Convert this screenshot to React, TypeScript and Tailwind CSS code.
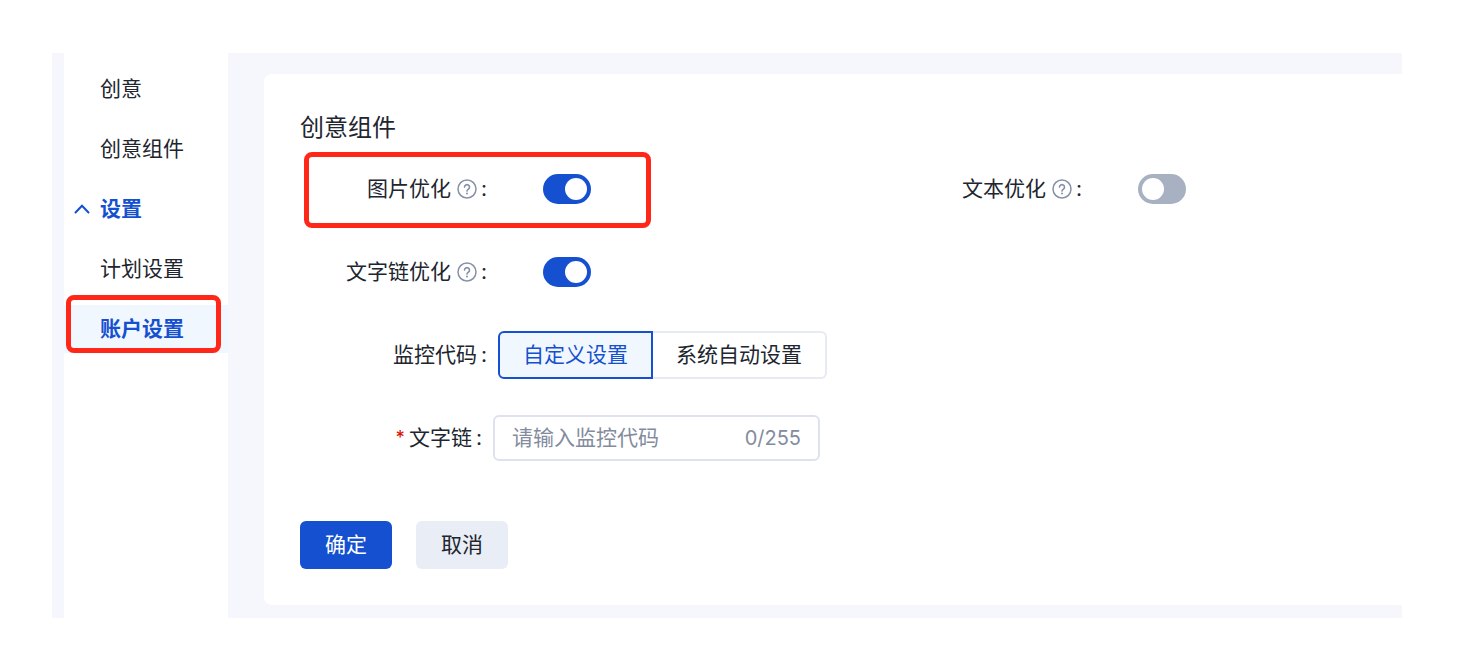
import { useState } from "react";
import type { ReactNode } from "react";

function HelpIcon() {
  return (
    <svg viewBox="0 0 20 20" className="size-5 text-[#8690a6]" fill="none" stroke="currentColor" aria-hidden="true">
      <circle cx="10" cy="10" r="9" strokeWidth="1.5" />
      <path d="M7.500 8.100a2.500 2.500 0 1 1 3.900 2.100c-.9.6-1.400 1-1.400 1.900" strokeWidth="1.6" strokeLinecap="round" />
      <circle cx="10" cy="14.4" r="1" fill="currentColor" stroke="none" />
    </svg>
  );
}

function SwitchRow({ id, label, on }: { id: string; label: string; on: boolean }) {
  return (
    <div className="flex h-12 items-center">
      <label htmlFor={id} className="flex w-[187px] items-center justify-end">
        {label}
        <span className="mr-1 ml-[6px]">
          <HelpIcon />
        </span>
        :
      </label>
      <input
        id={id}
        type="checkbox"
        role="switch"
        defaultChecked={on}
        className="ml-14 h-[30px] w-12 cursor-pointer appearance-none rounded-full bg-[#a7b1c2] p-1 before:block before:size-[22px] before:rounded-full before:bg-white checked:bg-[#1450cf] checked:before:ml-[18px]"
      />
    </div>
  );
}

function NavLink({ children }: { children: ReactNode }) {
  return (
    <a href="#" className="flex h-12 items-center pl-9">
      {children}
    </a>
  );
}

const segmentBase = "h-12 cursor-pointer border-2 px-[23px]";

export default function App() {
  const [custom, setCustom] = useState(true);
  const [open, setOpen] = useState(true);
  const [code, setCode] = useState("");

  return (
    <div className="bg-white pt-[53px] pr-20 pb-[33px] pl-[52px] font-['Inter','Noto_Sans_CJK_SC',sans-serif] text-[21px] leading-8 text-[#21252e]">
      <div className="flex bg-[#f6f7fc] pl-3">
        <nav className="flex w-[164px] shrink-0 flex-col gap-3 bg-white pt-3">
          <NavLink>创意</NavLink>
          <NavLink>创意组件</NavLink>
          <button
            type="button"
            aria-expanded={open}
            onClick={() => setOpen(!open)}
            className="flex h-12 cursor-pointer items-center gap-[10px] pl-[10px] font-bold text-[#1450cf]"
          >
            <svg viewBox="0 0 16 10" className="h-[10px] w-4" fill="none" stroke="currentColor" strokeWidth="2" strokeLinecap="round" aria-hidden="true">
              <path d="M1.5 8.5 8 1.8l6.500 6.700" />
            </svg>
            设置
          </button>
          {open && (
            <>
              <NavLink>计划设置</NavLink>
              <div className="relative bg-[#f1f7ff] font-bold text-[#1450cf]">
                <NavLink>账户设置</NavLink>
                <span className="pointer-events-none absolute -top-[10px] right-[7px] bottom-0 left-[2px] rounded-lg border-[5px] border-[#ff2718]" />
              </div>
            </>
          )}
        </nav>

        <main className="min-w-0 flex-1 pt-[21px] pb-[13px] pl-9">
          <form className="rounded-l-lg bg-white pt-[38px] pb-9 pl-9" onSubmit={(e) => e.preventDefault()}>
            <h1 className="text-2xl leading-8">创意组件</h1>

            <div className="mt-[21px] flex flex-col gap-[35px]">
              <div className="grid grid-cols-[54%_46%]">
                <div className="relative">
                  <SwitchRow id="image-opt" label="图片优化" on />
                  <span className="pointer-events-none absolute -top-[13px] -bottom-[15px] left-1 w-[347px] rounded-lg border-[5px] border-[#ff2718]" />
                </div>
                <SwitchRow id="text-opt" label="文本优化" on={false} />
              </div>

              <SwitchRow id="link-opt" label="文字链优化" on />

              <div className="flex items-center">
                <span id="monitor-label" className="flex w-[187px] justify-end gap-1">
                  监控代码<span>:</span>
                </span>
                <div role="group" aria-labelledby="monitor-label" className="ml-[11px] flex">
                  <button
                    type="button"
                    aria-pressed={custom}
                    onClick={() => setCustom(true)}
                    className={`${segmentBase} rounded-l-md ${custom ? "border-[#1450cf] bg-[#f1f7ff] text-[#1450cf]" : "border-[#e6eaf3] border-r-0"}`}
                  >
                    自定义设置
                  </button>
                  <button
                    type="button"
                    aria-pressed={!custom}
                    onClick={() => setCustom(false)}
                    className={`${segmentBase} rounded-r-md ${custom ? "border-[#e6eaf3] border-l-0" : "border-[#1450cf] bg-[#f1f7ff] text-[#1450cf]"}`}
                  >
                    系统自动设置
                  </button>
                </div>
              </div>

              <div className="flex h-12 items-center">
                <label htmlFor="code" className="flex w-[182px] justify-end gap-1">
                  <span className="text-lg leading-8 font-medium text-[#d9150b]">*</span>
                  文字链<span>:</span>
                </label>
                <div className="ml-[11px] flex h-[46px] w-[327px] items-center rounded-md border-2 border-[#dde2ee] px-[17px] text-[#838c9e]">
                  <input
                    id="code"
                    type="text"
                    maxLength={255}
                    value={code}
                    onChange={(e) => setCode(e.target.value)}
                    placeholder="请输入监控代码"
                    className="min-w-0 flex-1 outline-none placeholder:text-[#838c9e]"
                  />
                  <span className="text-xl">{code.length}/255</span>
                </div>
              </div>
            </div>

            <div className="mt-[59px] flex gap-6">
              <button type="submit" className="h-12 w-[92px] cursor-pointer rounded-md bg-[#1450cf] text-white">
                确定
              </button>
              <button type="button" className="h-12 w-[92px] cursor-pointer rounded-md bg-[#e9edf6]">
                取消
              </button>
            </div>
          </form>
        </main>
      </div>
    </div>
  );
}
